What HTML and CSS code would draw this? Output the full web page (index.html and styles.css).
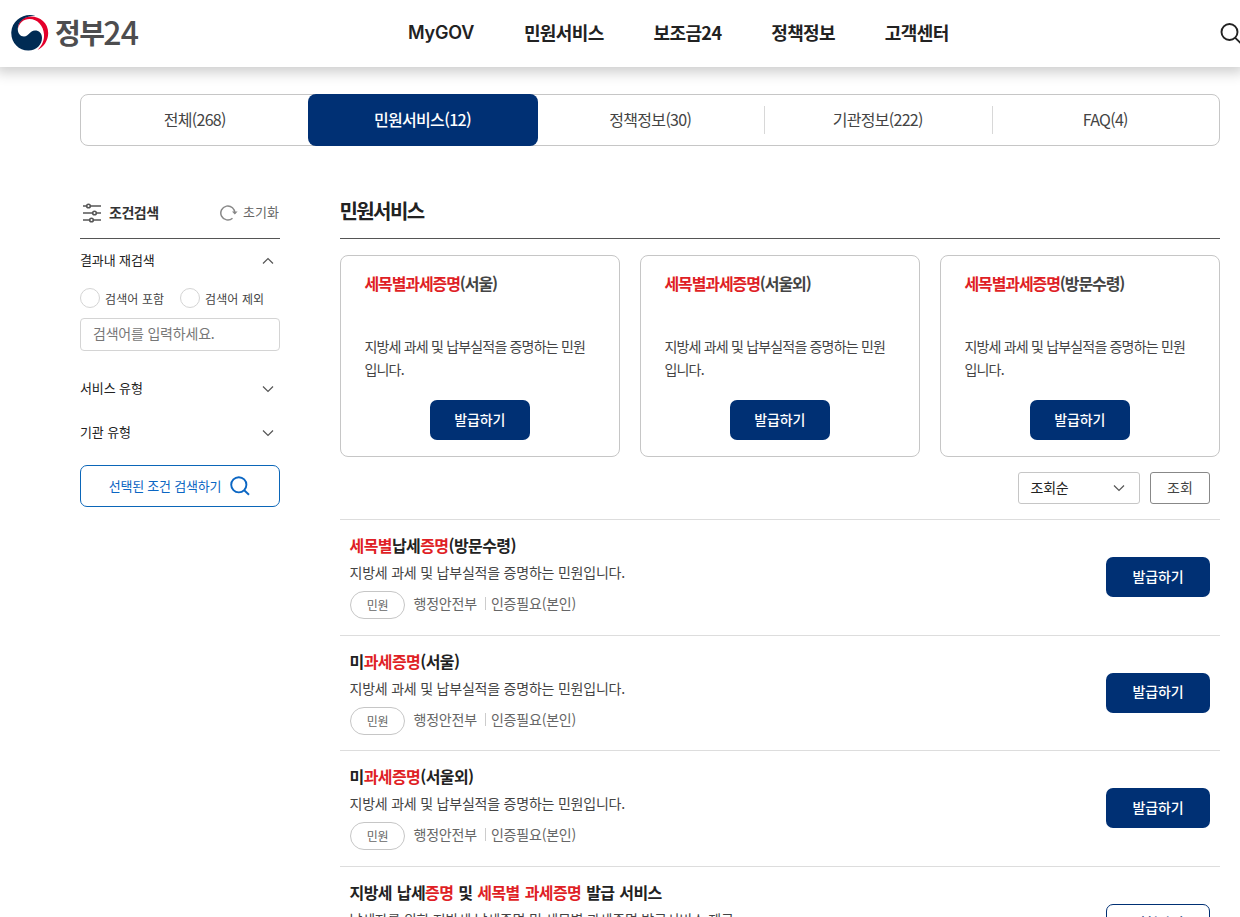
FILE: index.html
```html
<!DOCTYPE html>
<html lang="ko">

<head>
    <meta charset="UTF-8" />
    <meta name="viewport" content="width=device-width, initial-scale=1.0" />
    <title>정부24</title>
    <link rel="stylesheet" href="styles.css">
</head>

<body>
    <!-- Header -->
    <header class="header">
        <a href="#" class="logo">
            <svg width="38" height="38" viewBox="0 0 38 38">
                <circle cx="19" cy="19" r="18" fill="#fff" />
                <path d="M7 15 C7 7 13 2.6 20 2.6 C29 2.6 37.2 9 37.2 19 C37.2 27 32.5 33 26.5 36 C31 31.5 33.4 26.5 33 20.5 C32.5 11.500 26.500 5 18.500 5 C12.500 5 8 9 7 15 Z" fill="#e4002b" />
                <path d="M24.500 1.800 C14 -1.800 1 5.500 0.300 18 C-0.300 29 8 36.800 17.500 36.600 C25.500 36.400 31 30.500 31 24 C31 19 28 16.500 24 16.500 C18.500 16.500 18 22.500 13 22.500 C9 22.500 6.600 19 6.800 14.500 C7.200 7 14 1.800 24.500 1.800 Z" fill="#002b54" />
            </svg>
            <span class="logo-name">정부</span><span class="logo-num">24</span>
        </a>
        <nav class="gnb">
            <a href="#" class="en">MyGOV</a>
            <a href="#">민원서비스</a>
            <a href="#">보조금24</a>
            <a href="#">정책정보</a>
            <a href="#">고객센터</a>
        </nav>
        <button class="search-open" aria-label="검색">
            <svg width="22" height="22" viewBox="0 0 22 22" fill="none" stroke="#222" stroke-width="1.900">
                <circle cx="9.500" cy="9" r="8" />
                <path d="M15 14.600 L21 20.500" />
            </svg>
        </button>
    </header>

    <!-- Tabs -->
    <ul class="tabs">
        <li><a href="#">전체(268)</a></li>
        <li class="on"><a href="#">민원서비스(12)</a></li>
        <li><a href="#">정책정보(30)</a></li>
        <li><a href="#">기관정보(222)</a></li>
        <li><a href="#">FAQ(4)</a></li>
    </ul>

    <div class="content">
        <!-- Filter -->
        <aside class="filter">
            <div class="filter-head">
                <svg width="20" height="20" viewBox="0 0 20 20" fill="none" stroke="#555" stroke-width="1.600">
                    <path d="M1 3 H4.500 M8.500 3 H19 M1 10 H10.500 M14.500 10 H19 M1 17 H7.500 M11.500 17 H19" />
                    <circle cx="6.500" cy="3" r="1.800" />
                    <circle cx="12.500" cy="10" r="1.800" />
                    <circle cx="9.500" cy="17" r="1.800" />
                </svg>
                <strong>조건검색</strong>
                <button class="reset">
                    <svg width="18" height="16" viewBox="0 0 18 16" fill="none" stroke="#888" stroke-width="1.500">
                        <path d="M12.500 13.200 A7 7 0 1 1 14.800 8.500" />
                        <path d="M12 6.500 H17.600 L14.800 9.600 Z" fill="#888" stroke="none" />
                    </svg>
                    <span>초기화</span>
                </button>
            </div>

            <div class="filter-row">
                <span>결과내 재검색</span>
                <svg width="12" height="8" viewBox="0 0 12 8" fill="none" stroke="#555" stroke-width="1.200"><path d="M1 6.500 L6 1.500 L11 6.500" /></svg>
            </div>
            <div class="radios">
                <label><input type="radio" name="word">검색어 포함</label>
                <label><input type="radio" name="word">검색어 제외</label>
            </div>
            <input type="text" class="word" placeholder="검색어를 입력하세요." />
            <div class="filter-row type">
                <span>서비스 유형</span>
                <svg width="12" height="8" viewBox="0 0 12 8" fill="none" stroke="#555" stroke-width="1.200"><path d="M1 1.500 L6 6.500 L11 1.500" /></svg>
            </div>
            <div class="filter-row org">
                <span>기관 유형</span>
                <svg width="12" height="8" viewBox="0 0 12 8" fill="none" stroke="#555" stroke-width="1.200"><path d="M1 1.500 L6 6.500 L11 1.500" /></svg>
            </div>
            <button class="filter-btn">
                <span>선택된 조건 검색하기</span>
                <svg width="20" height="20" viewBox="0 0 20 20" fill="none" stroke="#0b66c3" stroke-width="1.900">
                    <circle cx="8.800" cy="8.800" r="7.600" />
                    <path d="M14.200 14.200 L19 18.800" />
                </svg>
            </button>
        </aside>

        <!-- Result -->
        <main class="result">
            <h2>민원서비스</h2>
            <div class="cards">
                <div class="card">
                    <h3><em>세목별과세증명</em>(서울)</h3>
                    <p>지방세 과세 및 납부실적을 증명하는 민원입니다.</p>
                    <button class="btn">발급하기</button>
                </div>
                <div class="card">
                    <h3><em>세목별과세증명</em>(서울외)</h3>
                    <p>지방세 과세 및 납부실적을 증명하는 민원입니다.</p>
                    <button class="btn">발급하기</button>
                </div>
                <div class="card">
                    <h3><em>세목별과세증명</em>(방문수령)</h3>
                    <p>지방세 과세 및 납부실적을 증명하는 민원입니다.</p>
                    <button class="btn">발급하기</button>
                </div>
            </div>

            <div class="sort">
                <button class="select">
                    <span>조회순</span>
                    <svg width="12" height="8" viewBox="0 0 12 8" fill="none" stroke="#555" stroke-width="1.200"><path d="M1 1.500 L6 6.500 L11 1.500" /></svg>
                </button>
                <button class="view">조회</button>
            </div>

            <ul class="list">
                <li>
                    <div class="info">
                        <h3><em>세목별</em>납세<em>증명</em>(방문수령)</h3>
                        <p>지방세 과세 및 납부실적을 증명하는 민원입니다.</p>
                        <div class="meta"><span class="badge">민원</span><span>행정안전부</span><span class="auth">인증필요(본인)</span></div>
                    </div>
                    <button class="btn">발급하기</button>
                </li>
                <li>
                    <div class="info">
                        <h3>미<em>과세증명</em>(서울)</h3>
                        <p>지방세 과세 및 납부실적을 증명하는 민원입니다.</p>
                        <div class="meta"><span class="badge">민원</span><span>행정안전부</span><span class="auth">인증필요(본인)</span></div>
                    </div>
                    <button class="btn">발급하기</button>
                </li>
                <li>
                    <div class="info">
                        <h3>미<em>과세증명</em>(서울외)</h3>
                        <p>지방세 과세 및 납부실적을 증명하는 민원입니다.</p>
                        <div class="meta"><span class="badge">민원</span><span>행정안전부</span><span class="auth">인증필요(본인)</span></div>
                    </div>
                    <button class="btn">발급하기</button>
                </li>
                <li>
                    <div class="info">
                        <h3>지방세 납세<em>증명</em> 및 <em>세목별</em> <em>과세증명</em> 발급 서비스</h3>
                        <p>납세자를 위한 지방세 납세증명 및 세목별 과세증명 발급서비스 제공</p>
                    </div>
                    <button class="btn line">신청하기</button>
                </li>
            </ul>
        </main>
    </div>
</body>

</html>
```
FILE: styles.css
```css
* {
    margin: 0;
    padding: 0;
    box-sizing: border-box;
}

body {
    height: 100vh;
    overflow: hidden;
    font-family: "Noto Sans CJK KR", sans-serif;
    font-size: 14px;
    color: #222;
    background: #fff;
}

a {
    color: inherit;
    text-decoration: none;
}

ul {
    list-style: none;
}

em {
    font-style: normal;
    color: #df1f26;
}

button {
    font-family: inherit;
    background: #fff;
    border: none;
    cursor: pointer;
}

/* Header */
.header {
    display: flex;
    align-items: center;
    height: 67px;
    padding-left: 11px;
    background: #fff;
    box-shadow: 0 2px 12px 4px rgba(0, 0, 0, 0.19);
}

.logo {
    display: flex;
    align-items: center;
    width: 397px;
    color: #4d4d4f;
    line-height: 40px;
}

.logo svg {
    position: relative;
    top: -1px;
}

.logo-name {
    margin-left: 6px;
    padding-bottom: 4px;
    font-size: 28px;
    font-weight: 700;
    letter-spacing: -1.6px;
}

.logo-num {
    padding-bottom: 5px;
    font-size: 32px;
    font-weight: 500;
    letter-spacing: -0.8px;
}

.gnb {
    display: flex;
    gap: 49.8px;
    padding-bottom: 3px;
    font-size: 18px;
    font-weight: 700;
    line-height: 26px;
    letter-spacing: -0.6px;
    white-space: nowrap;
}

.gnb .en {
    padding-top: 1px;
    font-family: Inter, sans-serif;
    font-weight: 600;
    letter-spacing: -0.2px;
}

.search-open {
    flex: none;
    height: 22px;
    margin-left: auto;
    margin-right: -2px;
}

/* Tabs */
.tabs {
    display: flex;
    height: 52px;
    margin: 27px 20px 0 80px;
    border: 1px solid #c6c6c6;
    border-radius: 8px;
}

.tabs li {
    flex: 1 0 0;
    display: flex;
    align-items: center;
    justify-content: center;
    color: #444;
    font-size: 16px;
    letter-spacing: -0.7px;
}

.tabs li a {
    padding-bottom: 2px;
}

.tabs li.on {
    flex: none;
    width: 230px;
    margin: -1px;
    color: #fff;
    font-weight: 500;
    background: #003074;
    border-radius: 8px;
}

.tabs li:nth-child(n+4)::before {
    content: "";
    width: 1px;
    height: 28px;
    margin-right: auto;
    background: #d8d8d8;
}

.tabs li:nth-child(n+4)::after {
    content: "";
    width: 1px;
    margin-left: auto;
}

.content {
    display: flex;
    gap: 60px;
    padding: 46px 20px 0 80px;
}

/* Filter */
.filter {
    width: 200px;
    font-size: 13px;
}

.filter-head {
    display: flex;
    align-items: center;
    height: 47px;
    padding: 0 0 4px 2px;
    border-bottom: 1px solid #555;
}

.filter-head strong {
    margin-left: 7px;
    padding-bottom: 2px;
    color: #333;
    font-size: 14px;
    letter-spacing: -0.5px;
}

.reset {
    display: flex;
    align-items: center;
    gap: 5px;
    margin-left: auto;
    margin-right: 1px;
    color: #666;
    font-size: 13px;
}

.reset span {
    padding-bottom: 3px;
}

.filter-row {
    display: flex;
    align-items: center;
    justify-content: space-between;
    height: 44px;
    padding-right: 6px;
}

.filter-row span {
    padding-bottom: 3px;
    letter-spacing: -0.1px;
}

.radios {
    display: flex;
    align-items: center;
    gap: 16px;
    height: 30px;
    color: #444;
    font-size: 12px;
    letter-spacing: 0.1px;
    white-space: nowrap;
}

.radios label {
    display: flex;
    align-items: center;
    width: 84px;
}

.radios input {
    appearance: none;
    flex: none;
    width: 20px;
    height: 20px;
    margin-right: 5px;
    border: 1px solid #d4d4d4;
    border-radius: 50%;
}

.word {
    display: block;
    width: 200px;
    height: 33px;
    margin-top: 5px;
    padding: 0 12px 3px;
    border: 1px solid #d4d4d4;
    border-radius: 4px;
    font-family: inherit;
    font-size: 14px;
    letter-spacing: -0.2px;
}

.word::placeholder {
    color: #777;
}

.filter-row.type {
    margin-top: 16px;
}

.filter-btn {
    display: flex;
    align-items: center;
    justify-content: center;
    gap: 9px;
    width: 200px;
    height: 42px;
    margin-top: 10px;
    padding-right: 1px;
    color: #0b66c3;
    font-size: 13px;
    letter-spacing: -0.2px;
    border: 1px solid #0b66b8;
    border-radius: 7px;
}

.filter-btn span {
    padding-bottom: 1px;
}

/* Result */
.result {
    width: 880px;
}

.result h2 {
    height: 47px;
    font-size: 20px;
    line-height: 37px;
    letter-spacing: -1.6px;
    text-indent: -0.5px;
    border-bottom: 1px solid #555;
}

.cards {
    display: flex;
    gap: 20px;
    margin-top: 16px;
}

.card {
    display: flex;
    flex-direction: column;
    width: 280px;
    height: 202px;
    padding: 14px 24px 0 23.5px;
    border: 1px solid #c6c6c6;
    border-radius: 8px;
}

.card h3 {
    height: 65px;
    color: #444;
    font-size: 16px;
    line-height: 26px;
    letter-spacing: -1.1px;
}

.card p {
    padding-right: 4px;
    color: #444;
    line-height: 23px;
    letter-spacing: -0.82px;
    word-break: break-all;
}

.btn {
    flex: none;
    width: 104px;
    height: 40px;
    padding-bottom: 3px;
    color: #fff;
    font-size: 14px;
    font-weight: 500;
    letter-spacing: -0.1px;
    background: #003074;
    border-radius: 7px;
}

.btn.line {
    color: #003074;
    background: #fff;
    border: 1px solid #003074;
}

.card .btn {
    align-self: center;
    width: 100px;
    margin-top: 19px;
}

.sort {
    display: flex;
    justify-content: flex-end;
    gap: 10px;
    padding: 15px 10px;
}

.sort button {
    height: 32px;
    font-size: 14px;
    border: 1px solid #c6c6c6;
    border-radius: 3px;
}

.sort .select {
    display: flex;
    align-items: center;
    justify-content: space-between;
    width: 122px;
    padding: 0 14px 0 11.5px;
    color: #222;
    letter-spacing: -0.2px;
}

.select span {
    padding-bottom: 2px;
}

.sort .view {
    width: 60px;
    padding-bottom: 2px;
    color: #444;
    border-color: #888;
}

/* List */
.list li {
    display: flex;
    justify-content: space-between;
    height: 115.6px;
    padding: 0 10px;
    border-top: 1px solid #ddd;
}

.list .btn {
    margin-top: 37px;
}

.info {
    padding-top: 12px;
    white-space: nowrap;
}

.info h3 {
    font-size: 16px;
    line-height: 26px;
    letter-spacing: -0.58px;
    word-spacing: 1px;
    text-indent: -0.5px;
}

.info p {
    padding-top: 1px;
    color: #444;
    line-height: 26px;
    letter-spacing: -0.22px;
    text-indent: -0.5px;
}

.meta {
    display: flex;
    align-items: flex-start;
    margin-top: 6px;
    color: #666;
    line-height: 25px;
    letter-spacing: -0.2px;
}

.badge {
    width: 55px;
    height: 28px;
    margin-right: 8.5px;
    font-size: 12px;
    text-align: center;
    border: 1px solid #c6c6c6;
    border-radius: 14px;
}

.auth {
    display: flex;
    align-items: center;
}

.auth::before {
    content: "";
    width: 1px;
    height: 13px;
    margin: 0 5px 0 8px;
    background: #ccc;
}
```
